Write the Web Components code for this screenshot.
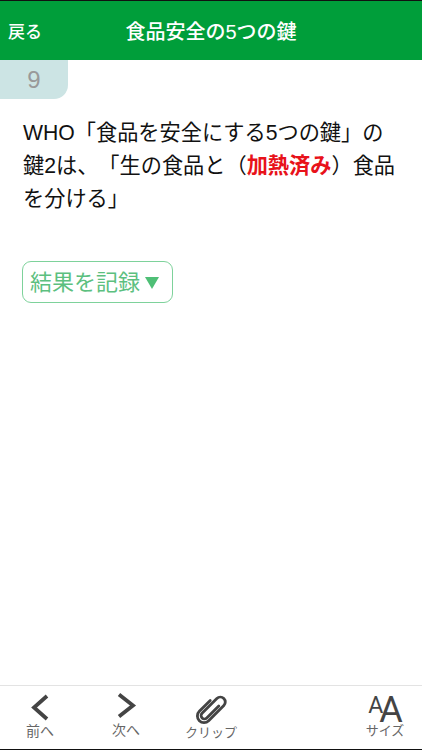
<!DOCTYPE html>
<html lang="ja">
<head>
<meta charset="utf-8">
<title>食品安全の5つの鍵</title>
<style>
    html, body { margin: 0; height: 100%; background: #fff; }
    body { font-family: "Liberation Sans", "Noto Sans CJK JP", sans-serif; text-spacing-trim: space-all; }
</style>
</head>
<body>
<quiz-screen>
    <nav-bar slot="top" back="戻る">食品安全の5つの鍵</nav-bar>
    <question-card number="9">
        WHO「食品を安全にする5つの鍵」の鍵2は、「生の食品と（<strong>加熱済み</strong>）食品を分ける」
    </question-card>
    <tool-bar slot="bottom"></tool-bar>
</quiz-screen>

<script>
class QuizScreen extends HTMLElement {
    constructor() {
        super();
        this.attachShadow({ mode: 'open' });
        this.shadowRoot.innerHTML = `
            <style>
                :host {
                    display: flex;
                    flex-direction: column;
                    height: 750px;
                    box-sizing: border-box;
                    border-top: 1px solid #111;
                    border-bottom: 1px solid #111;
                    overflow: hidden;
                }
                main { flex: 1; min-height: 0; }
            </style>
            <slot name="top"></slot>
            <main><slot></slot></main>
            <slot name="bottom"></slot>
        `;
    }
}

class NavBar extends HTMLElement {
    constructor() {
        super();
        this.attachShadow({ mode: 'open' });
    }

    connectedCallback() {
        this.shadowRoot.innerHTML = `
            <style>
                :host {
                    display: grid;
                    grid-template-columns: 1fr auto 1fr;
                    align-items: center;
                    height: 59px;
                    background: #009e3a;
                    color: #fff;
                }
                .back { font-size: 17px; font-weight: 500; padding-left: 8px; }
                .title { font-size: 20px; font-weight: 500; }
            </style>
            <span class="back">${this.getAttribute('back')}</span>
            <span class="title"><slot></slot></span>
        `;
    }
}

class QuestionCard extends HTMLElement {
    constructor() {
        super();
        this.attachShadow({ mode: 'open' });
    }

    connectedCallback() {
        this.shadowRoot.innerHTML = `
            <style>
                :host { display: block; }
                .tab {
                    width: 68px;
                    height: 39px;
                    background: #cce4e4;
                    border-bottom-right-radius: 14px;
                    color: #999;
                    font-size: 24px;
                    display: flex;
                    align-items: center;
                    justify-content: center;
                }
                .text {
                    margin: 17px 22px 0 23px;
                    font-size: 21.2px;
                    line-height: 33px;
                    color: #111;
                }
                ::slotted(strong) { color: #e8121a; }
                record-button { margin: 46px 0 0 22px; }
            </style>
            <div class="tab">${this.getAttribute('number')}</div>
            <div class="text"><slot></slot></div>
            <record-button>結果を記録</record-button>
        `;
    }
}

class RecordButton extends HTMLElement {
    constructor() {
        super();
        this.attachShadow({ mode: 'open' });
        this.shadowRoot.innerHTML = `
            <style>
                :host {
                    display: flex;
                    align-items: center;
                    gap: 5px;
                    box-sizing: border-box;
                    width: 151px;
                    height: 42px;
                    padding: 0 0 4px 7px;
                    border: 1.5px solid #7ed29b;
                    border-radius: 9px;
                    color: #5cc07f;
                    font-size: 22px;
                }
                svg { width: 14px; height: 13px; fill: #4fbf76; margin-top: 4px; }
            </style>
            <slot></slot>
            <svg viewBox="0 0 14 13"><path d="M0 1h14L7 13z"/></svg>
        `;
    }
}

class ToolItem extends HTMLElement {
    constructor() {
        super();
        this.attachShadow({ mode: 'open' });
    }

    connectedCallback() {
        const drop = this.getAttribute('drop') || 0;
        const size = this.getAttribute('size') || 14;
        this.shadowRoot.innerHTML = `
            <style>
                :host {
                    display: flex;
                    flex-direction: column;
                    align-items: center;
                    color: #666;
                }
                .icon { height: 35px; display: flex; align-items: flex-start; justify-content: center; }
                .label { font-size: ${size}px; line-height: 16px; margin-top: ${drop}px; white-space: nowrap; }
            </style>
            <div class="icon"><slot name="icon"></slot></div>
            <div class="label">${this.getAttribute('label')}</div>
        `;
    }
}

class ToolBar extends HTMLElement {
    constructor() {
        super();
        this.attachShadow({ mode: 'open' });
        this.shadowRoot.innerHTML = `
            <style>
                :host {
                    display: grid;
                    grid-template-columns: 80px 92px 78px 1fr 74px;
                    height: 64px;
                    box-sizing: border-box;
                    padding-top: 1px;
                    border-top: 1px solid #e3e3e3;
                    background: #fff;
                }
                svg { display: block; fill: none; stroke: #444; }
                .aa {
                    display: flex;
                    align-items: flex-start;
                    margin: 5px 0 0 1px;
                    color: #444;
                    font-family: Roboto, "Liberation Sans", sans-serif;
                    line-height: 1;
                }
                .aa .small { font-size: 23px; font-weight: 400; margin: 2px -4px 0 0; }
                .aa .big { font-size: 36px; font-weight: 400; }
            </style>
            <tool-item label="前へ" drop="1">
                <svg slot="icon" width="28" height="38" viewBox="0 0 28 38" stroke-width="3.8"><path d="M21 9 8 20.500 21 32"/></svg>
            </tool-item>
            <tool-item label="次へ" drop="0">
                <svg slot="icon" width="28" height="38" viewBox="0 0 28 38" stroke-width="3.8"><path d="M7 7.500l14 11L7 29.500"/></svg>
            </tool-item>
            <tool-item label="クリップ" drop="3" size="13">
                <svg slot="icon" width="32" height="38" viewBox="0 0 32 38" stroke-width="2.8" stroke-linecap="round"><path transform="translate(16 22) rotate(45) scale(1.1)" d="M3-7V8.500a3 3 0 0 1-6 0V-10.500a4.500 4.500 0 0 1 9 0V9a6 6 0 0 1-12 0V-5" vector-effect="non-scaling-stroke"/></svg>
            </tool-item>
            <span></span>
            <tool-item label="サイズ" drop="1" size="13">
                <div slot="icon" class="aa"><span class="small">A</span><span class="big">A</span></div>
            </tool-item>
        `;
    }
}

customElements.define('quiz-screen', QuizScreen);
customElements.define('nav-bar', NavBar);
customElements.define('question-card', QuestionCard);
customElements.define('record-button', RecordButton);
customElements.define('tool-item', ToolItem);
customElements.define('tool-bar', ToolBar);
</script>
</body>
</html>
